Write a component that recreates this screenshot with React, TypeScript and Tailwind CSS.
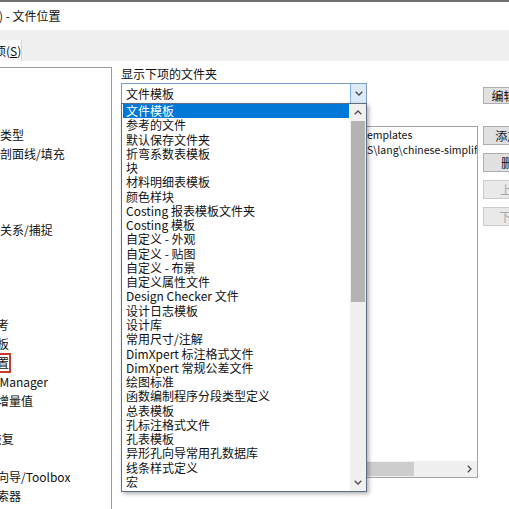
const sysOptions: [string, number][] = [
  ["普通", 0],
  ["MBD", 0],
  ["工程图", 0],
  ["显示类型", 1],
  ["区域剖面线/填充", 1],
  ["性能", 1],
  ["颜色", 0],
  ["草图", 0],
  ["几何关系/捕捉", 1],
  ["显示", 0],
  ["选择", 0],
  ["性能", 0],
  ["装配体", 0],
  ["外部参考", 0],
  ["默认模板", 0],
  ["文件位置", 0],
  ["FeatureManager", 0],
  ["选值框增量值", 0],
  ["视图", 0],
  ["备份/恢复", 0],
  ["触摸", 0],
  ["异型孔向导/Toolbox", 0],
  ["文件探索器", 0],
  ["搜索", 0],
];

const folderTypes = [
  "文件模板",
  "参考的文件",
  "默认保存文件夹",
  "折弯系数表模板",
  "块",
  "材料明细表模板",
  "颜色样块",
  "Costing 报表模板文件夹",
  "Costing 模板",
  "自定义 - 外观",
  "自定义 - 贴图",
  "自定义 - 布景",
  "自定义属性文件",
  "Design Checker 文件",
  "设计日志模板",
  "设计库",
  "常用尺寸/注解",
  "DimXpert 标注格式文件",
  "DimXpert 常规公差文件",
  "绘图标准",
  "函数编制程序分段类型定义",
  "总表模板",
  "孔标注格式文件",
  "孔表模板",
  "异形孔向导常用孔数据库",
  "线条样式定义",
  "宏",
];

const buttons = [
  { label: "添加(D)...", disabled: false },
  { label: "删除(E)", disabled: false },
  { label: "上移(U)", disabled: true },
  { label: "下移(W)", disabled: true },
];

function Chevron({ dir }: { dir: "up" | "down" }) {
  return (
    <svg width="8" height="5" viewBox="0 0 8 5" fill="none">
      <path
        d={dir === "down" ? "M0.7 0.8L4 4L7.3 0.8" : "M0.7 4.2L4 1L7.3 4.2"}
        stroke="#4a4a4a"
        strokeWidth="1.3"
      />
    </svg>
  );
}

export default function App() {
  return (
    <div className="w-[509px] h-[509px] overflow-hidden bg-white flex flex-col font-['Noto_Sans_CJK_SC','Microsoft_YaHei',sans-serif] text-[12px] text-[#111]">
      <div className="h-[2px] shrink-0 bg-[#707070]" />
      <div className="h-[28px] shrink-0 flex items-center -ml-[1px] pb-[1px] whitespace-nowrap">
        ) - 文件位置
      </div>

      {/* tab strip */}
      <div className="h-[31px] shrink-0 bg-[#f0f0f0] flex items-end">
        <div className="h-[21px] w-[22px] bg-[#fafafa] border-r border-[#d6d6d6] flex items-center overflow-hidden whitespace-nowrap">
          <span className="-ml-[6px]">
            项(<span className="underline">S</span>)
          </span>
        </div>
      </div>

      <div className="flex-1 min-h-0 flex pt-[6px]">
        {/* options tree */}
        <div className="w-[112px] shrink-0 border-t border-r border-[#9c9c9c] overflow-hidden">
          <div className="-ml-[39px] flex flex-col">
            {sysOptions.map(([label, level], i) => (
              <div
                key={i}
                className={`h-[19px] shrink-0 flex items-center whitespace-nowrap ${level ? "pl-[15px]" : ""} ${
                  label === "FeatureManager" ? "-ml-[4px]" : ""
                }`}
              >
                {label === "文件位置" ? (
                  <span className="h-[20px] -ml-[2px] border-2 border-[#c9392c] flex items-center">{label}</span>
                ) : (
                  label
                )}
              </div>
            ))}
          </div>
        </div>

        {/* file locations page */}
        <div className="ml-[9px] flex">
          <div className="w-[357px] flex flex-col">
            <div className="h-[14px] leading-[14px] whitespace-nowrap">显示下项的文件夹</div>
            <div className="relative mt-[2px] w-[246px] h-[21px] border border-[#7d9cc4] flex items-center">
              <span className="pl-[4px]">文件模板</span>
              <div className="ml-auto w-[16px] h-full bg-[#dceaf8] border-l border-[#7eb4ea] flex items-center justify-center">
                <Chevron dir="down" />
              </div>

              {/* open dropdown */}
              <div className="absolute -left-[1px] top-[19px] w-[246px] h-[389px] z-10 bg-white border border-[#5c6f86] shadow-[2px_2px_4px_rgba(0,0,0,0.3)] flex">
                <div className="flex-1 flex flex-col overflow-hidden">
                  {folderTypes.map((t, i) => (
                    <div
                      key={t}
                      className={`h-[14.27px] leading-[14.27px] shrink-0 mx-[1px] pl-[3px] whitespace-nowrap ${
                        i === 0 ? "bg-[#0078d7] text-white" : ""
                      }`}
                    >
                      {t}
                    </div>
                  ))}
                </div>
                <div className="w-[16px] shrink-0 bg-[#f0f0f0] flex flex-col">
                  <div className="h-[17px] flex items-center justify-center">
                    <Chevron dir="up" />
                  </div>
                  <div className="h-[181px] mx-[1px] bg-[#b3b3b3]" />
                  <div className="flex-1" />
                  <div className="h-[17px] flex items-center justify-center">
                    <Chevron dir="down" />
                  </div>
                </div>
              </div>
            </div>

            {/* folder list */}
            <div className="mt-[22px] h-[352px] border border-[#a3a3a3] flex flex-col overflow-hidden text-[10.5px]">
              <div className="pl-[245px] leading-[15px] whitespace-nowrap">emplates</div>
              <div className="pl-[245px] leading-[15px] whitespace-nowrap">S\lang\chinese-simplified\Tutorial</div>
              <div className="mt-auto h-[16px] bg-[#f0f0f0] flex items-center">
                <div className="w-[292px] h-[14px] bg-[#cdcdcd]" />
                <div className="ml-auto w-[16px] flex items-center justify-center">
                  <svg width="5" height="8" viewBox="0 0 5 8" fill="none">
                    <path d="M0.8 0.7L4 4L0.8 7.3" stroke="#4a4a4a" strokeWidth="1.3" />
                  </svg>
                </div>
              </div>
            </div>
          </div>

          {/* buttons */}
          <div className="ml-[5px] flex flex-col">
            <div className="mt-[20px] w-[75px] h-[17px] border border-[#adadad] bg-[#e1e1e1] flex items-center justify-center whitespace-nowrap">
              编辑所有...
            </div>
            <div className="mt-[22px] flex flex-col gap-[8px]">
              {buttons.map((b) => (
                <div
                  key={b.label}
                  className={`w-[75px] h-[19px] border flex items-center justify-center whitespace-nowrap ${
                    b.disabled ? "border-[#cbcbcb] bg-[#e9e9e9] text-[#a8a8a8]" : "border-[#adadad] bg-[#e1e1e1]"
                  }`}
                >
                  {b.label}
                </div>
              ))}
            </div>
          </div>
        </div>
      </div>
    </div>
  );
}
